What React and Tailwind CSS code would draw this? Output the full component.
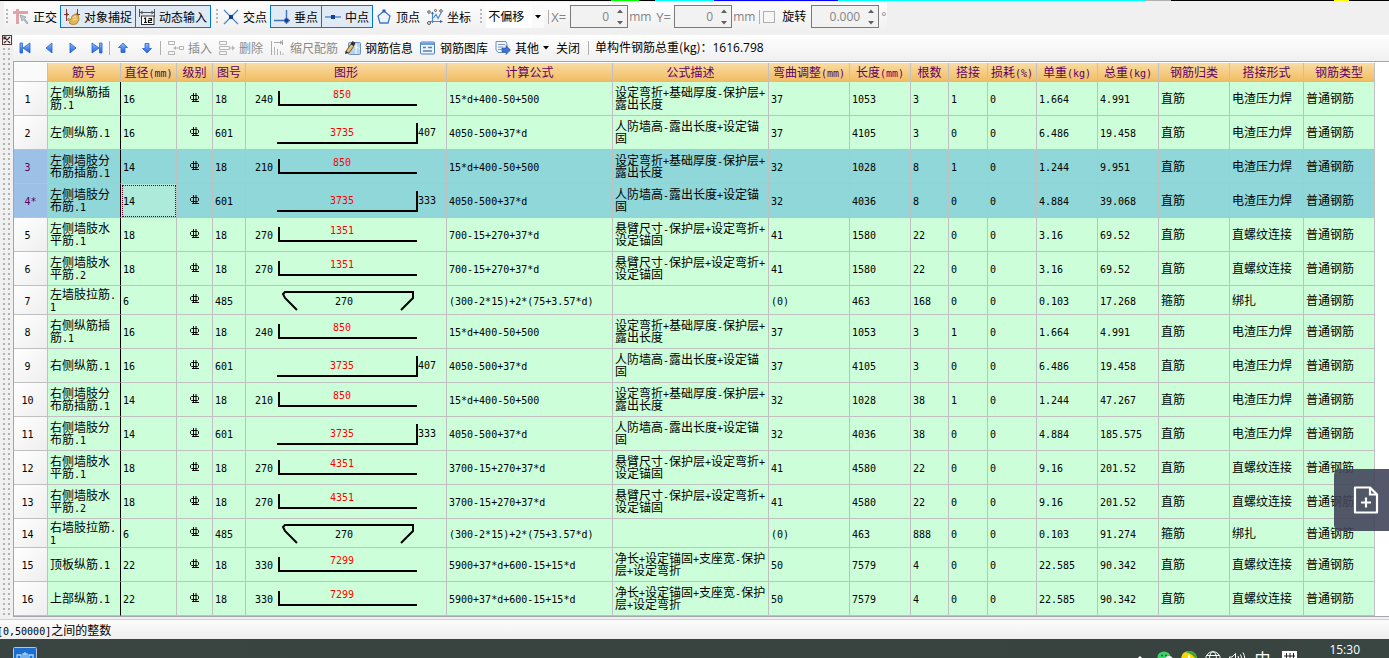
import React from "react";

const LATIN = "font-['DejaVu_Sans_Mono'] text-[10px]";

/* Sets half-width characters in a monospaced face beside full-width Chinese ones. */
function T({ children }) {
  const parts = String(children).match(/[\x20-\x7e]+|[^\x20-\x7e]+/g) || [];
  return parts.map((p, i) =>
    /^[\x20-\x7e]/.test(p) ? (
      <span key={i} className="font-['DejaVu_Sans_Mono',monospace] text-[10px] leading-[6px]">{p}</span>
    ) : (
      <React.Fragment key={i}>{p}</React.Fragment>
    )
  );
}

const COLUMNS = [
  ["", "w-[34px]"],
  ["筋号", "w-[73px]"],
  ["直径(mm)", "w-[56px]"],
  ["级别", "w-[36px]"],
  ["图号", "w-[33px]"],
  ["图形", "w-[201px]"],
  ["计算公式", "w-[166px]"],
  ["公式描述", "w-[156px]"],
  ["弯曲调整(mm)", "w-[81px]"],
  ["长度(mm)", "w-[61px]"],
  ["根数", "w-[38px]"],
  ["搭接", "w-[39px]"],
  ["损耗(%)", "w-[49px]"],
  ["单重(kg)", "w-[61px]"],
  ["总重(kg)", "w-[61px]"],
  ["钢筋归类", "w-[71px]"],
  ["搭接形式", "w-[74px]"],
  ["钢筋类型", "w-[71px]"],
];

const D1 = "设定弯折+基础厚度-保护层+\n露出长度";
const D2 = "人防墙高-露出长度+设定锚\n固";
const D3 = "悬臂尺寸-保护层+设定弯折+\n设定锚固";
const D4 = "净长+设定锚固+支座宽-保护\n层+设定弯折";
const DZ = "电渣压力焊";
const LW = "直螺纹连接";

/* name, diameter, figure no., side length, main length, formula, description, bend, length, count, laps, unit weight, total weight, class, joint */
const ROWS = [
  ["左侧纵筋插\n筋.1", 16, 18, 240, 850, "15*d+400-50+500", D1, "37", 1053, 3, 1, "1.664", "4.991", "直筋", DZ],
  ["左侧纵筋.1", 16, 601, 407, 3735, "4050-500+37*d", D2, "37", 4105, 3, 0, "6.486", "19.458", "直筋", DZ],
  ["左侧墙肢分\n布筋插筋.1", 14, 18, 210, 850, "15*d+400-50+500", D1, "32", 1028, 8, 1, "1.244", "9.951", "直筋", DZ],
  ["左侧墙肢分\n布筋.1", 14, 601, 333, 3735, "4050-500+37*d", D2, "32", 4036, 8, 0, "4.884", "39.068", "直筋", DZ],
  ["左侧墙肢水\n平筋.1", 18, 18, 270, 1351, "700-15+270+37*d", D3, "41", 1580, 22, 0, "3.16", "69.52", "直筋", LW],
  ["左侧墙肢水\n平筋.2", 18, 18, 270, 1351, "700-15+270+37*d", D3, "41", 1580, 22, 0, "3.16", "69.52", "直筋", LW],
  ["左墙肢拉筋.\n1", 6, 485, null, 270, "(300-2*15)+2*(75+3.57*d)", "", "(0)", 463, 168, 0, "0.103", "17.268", "箍筋", "绑扎"],
  ["右侧纵筋插\n筋.1", 16, 18, 240, 850, "15*d+400-50+500", D1, "37", 1053, 3, 1, "1.664", "4.991", "直筋", DZ],
  ["右侧纵筋.1", 16, 601, 407, 3735, "4050-500+37*d", D2, "37", 4105, 3, 0, "6.486", "19.458", "直筋", DZ],
  ["右侧墙肢分\n布筋插筋.1", 14, 18, 210, 850, "15*d+400-50+500", D1, "32", 1028, 38, 1, "1.244", "47.267", "直筋", DZ],
  ["右侧墙肢分\n布筋.1", 14, 601, 333, 3735, "4050-500+37*d", D2, "32", 4036, 38, 0, "4.884", "185.575", "直筋", DZ],
  ["右侧墙肢水\n平筋.1", 18, 18, 270, 4351, "3700-15+270+37*d", D3, "41", 4580, 22, 0, "9.16", "201.52", "直筋", LW],
  ["右侧墙肢水\n平筋.2", 18, 18, 270, 4351, "3700-15+270+37*d", D3, "41", 4580, 22, 0, "9.16", "201.52", "直筋", LW],
  ["右墙肢拉筋.\n1", 6, 485, null, 270, "(300-2*15)+2*(75+3.57*d)", "", "(0)", 463, 888, 0, "0.103", "91.274", "箍筋", "绑扎"],
  ["顶板纵筋.1", 22, 18, 330, 7299, "5900+37*d+600-15+15*d", D4, "50", 7579, 4, 0, "22.585", "90.342", "直筋", LW],
  ["上部纵筋.1", 22, 18, 330, 7299, "5900+37*d+600-15+15*d", D4, "50", 7579, 4, 0, "22.585", "90.342", "直筋", LW],
];

function Shape({ kind, side, main }) {
  const tie = kind === 485;
  const text = LATIN;
  return (
    <svg width="200" height={tie ? 28 : 33} className="block" fill="none" stroke="#000" strokeWidth="2">
      {kind === 18 && (
        <>
          <path d="M33 9V23H171" />
          <text x="9" y="21" className={text} fill="#000" stroke="none">{side}</text>
          <text x="96" y="16" textAnchor="middle" className={text} fill="#f00" stroke="none">{main}</text>
        </>
      )}
      {kind === 601 && (
        <>
          <path d="M31 27H171V7" />
          <text x="172" y="20" className={text} fill="#000" stroke="none">{side}</text>
          <text x="96" y="20" textAnchor="middle" className={text} fill="#f00" stroke="none">{main}</text>
        </>
      )}
      {tie && (
        <>
          <path d="M51 24L39 12L37 8L39 6H167V12L163 16L155 24" />
          <text x="98" y="19" textAnchor="middle" className={text} fill="#000" stroke="none">{main}</text>
        </>
      )}
    </svg>
  );
}

function Grade() {
  return (
    <svg width="11" height="11" viewBox="0 0 11 11" className="mx-auto block" fill="none" stroke="#000">
      <path d="M2.5 2.5H8.5L9.5 3.5V5.500L8.5 6.500H2.5L1.5 5.500V3.5Z M4.500 0V9 M7 0V9 M3 8.500H10" />
    </svg>
  );
}

function Row({ r, n }) {
  const sel = n === 3 || n === 4;
  const cell = "border-r border-b border-[#c0c0c0] p-0 pb-px pl-[2px] text-left whitespace-pre";
  return (
    <tr className={(r[2] === 485 ? "h-[29px]" : "h-[34px]") + (sel ? " bg-[#90d7d9]" : " bg-[#ccffd9]")}>
      <th
        className={
          "border-r border-b border-[#c0c0c0] p-0 pb-px text-center font-normal " +
          (n === 4 ? "" : "pr-1.5 ") +
          (sel ? "bg-[#9dc0e6] text-[#600060]" : "bg-gradient-to-br from-white to-[#eeeeee]")
        }
      >
        <T>{n === 4 ? "4*" : n}</T>
      </th>
      <td className="border-r border-b border-r-black border-b-[#c0c0c0] p-0 pb-px pl-[2px] whitespace-pre"><T>{r[0]}</T></td>
      <td className={cell + (n === 4 ? " bg-[#aeead9] outline-1 -outline-offset-2 outline-dotted outline-[#600030]" : "")}><T>{r[1]}</T></td>
      <td className="border-r border-b border-[#c0c0c0] p-0 pb-px"><Grade /></td>
      <td className={cell}><T>{r[2]}</T></td>
      <td className="border-r border-b border-[#c0c0c0] p-0"><Shape kind={r[2]} side={r[3]} main={r[4]} /></td>
      {r.slice(5, 11).map((v, i) => (
        <td key={i} className={cell}><T>{v}</T></td>
      ))}
      <td className={cell}><T>0</T></td>
      {r.slice(11).map((v, i) => (
        <td key={i} className={cell}><T>{v}</T></td>
      ))}
      <td className={cell}>普通钢筋</td>
    </tr>
  );
}

function Icon({ children, w = 16 }) {
  return (
    <svg width={w} height="16" viewBox={`0 0 ${w} 16`} fill="none" className="shrink-0">
      {children}
    </svg>
  );
}

function Tool({ icon, label, on, disabled, arrow }) {
  return (
    <button
      type="button"
      disabled={disabled}
      aria-pressed={on}
      className={
        "-ml-px flex h-[23px] shrink-0 items-center gap-1 border px-[3px] whitespace-nowrap " +
        (on ? "relative border-[#0078d7] bg-[#dfeaf5] " : "border-transparent ") +
        (disabled ? "text-[#8a8a8a]" : "text-black")
      }
    >
      {icon}
      <span>{label}</span>
      {arrow && <svg width="6" height="4" viewBox="0 0 6 4"><path d="M0 0H6L3 3.5Z" fill="#000" /></svg>}
    </button>
  );
}

const Grip = () => (
  <svg width="3" height="16" className="shrink-0">
    {[0, 4, 8, 12].map((y) => <rect key={y} x="0" y={y} width="2" height="2" fill="#b8b8b8" />)}
  </svg>
);

const Sep = ({ className }) => <span className={"h-[14px] w-px shrink-0 bg-[#b0b0b0] " + className} />;

function Spin({ id, value, width }) {
  return (
    <span className={"flex h-[23px] shrink-0 items-center border border-[#7a7a7a] bg-[#f2f2f2] " + width}>
      <input id={id} defaultValue={value} disabled className="min-w-0 flex-1 bg-transparent pr-1 text-right text-[#848484]" />
      <span className="flex w-[14px] flex-col items-center gap-2">
        <button type="button" aria-label="+" className="block">
          <svg width="6" height="4" viewBox="0 0 6 4" className="block"><path d="M0 4L3 0.5L6 4Z" fill="#606060" /></svg>
        </button>
        <button type="button" aria-label="-" className="block">
          <svg width="6" height="4" viewBox="0 0 6 4" className="block"><path d="M0 0L3 3.5L6 0Z" fill="#606060" /></svg>
        </button>
      </span>
    </span>
  );
}

function Nav({ d, label, className = "w-6" }) {
  return (
    <button type="button" aria-label={label} className={"flex h-[23px] shrink-0 items-center justify-center " + className}>
      <svg width="14" height="14" viewBox="0 0 14 14">
        <path d={d} fill="url(#navBlue)" stroke="#2a5fcf" strokeWidth="0.8" />
      </svg>
    </button>
  );
}

const ICONS = {
  ortho: <Icon><path d="M0 3.5H15M4.5 0V15" stroke="#dda5a5" strokeWidth="3" /><path d="M7 6L9 12L10.5 10.5L14 15L15 14L11.5 9.5L13 8Z" fill="#b9c8d6" stroke="#8a98a8" strokeWidth="0.7" /></Icon>,
  snap: <Icon><path d="M2.5 0V12M13.5 0V8M0 5.5H5M11 5.5H16" stroke="#8c3b3b" /><path d="M3.5 3.500L1 5.5L3.5 7.500ZM12.5 3.500L15 5.5L12.5 7.500Z" fill="#7a3030" /><path d="M4 9.500L7 10.500L8 7L11 5L14.500 6.500L15 11L12.500 15L8 15.500L5 14L6.500 12.500L3.500 11Z" fill="#e3b75b" stroke="#a87a2a" strokeWidth="0.8" /><path d="M9 8.500L12 7.500M9 11L12.500 10" stroke="#fbe7b0" /></Icon>,
  dyn: <Icon><path d="M0.500 0V8M15.500 0V8M0.500 3.5H15.500" stroke="#555" /><path d="M3.500 1.500L1 3.5L3.500 5.500ZM12.500 1.500L15 3.5L12.500 5.500Z" fill="#555" /><rect x="2.500" y="7" width="12.500" height="8.500" fill="#fff" stroke="#333" /><path d="M5 9.500L6.500 9V13.500M5 13.500H8M9.500 9.500H12.500V11.300H9.500V13.500H13" stroke="#111" strokeWidth="1.200" /></Icon>,
  cross: <Icon><path d="M1 1L15 15M15 1L1 15" stroke="#4b86cf" strokeWidth="1.3" /><rect x="6" y="6" width="4" height="4" fill="#123f8f" /></Icon>,
  perp: <Icon><path d="M0 11.500H16M12.500 1V15" stroke="#3c72b8" strokeWidth="1.4" /><rect x="10.500" y="9.500" width="4" height="4" fill="#123f8f" /></Icon>,
  mid: <Icon><path d="M0 8H16" stroke="#4b86cf" strokeWidth="1.4" /><rect x="6" y="6" width="4" height="4" fill="#123f8f" /></Icon>,
  vertex: <Icon><path d="M8 2L14 7L12 14H4L2 7Z" fill="#eef5fd" stroke="#3c78c8" strokeWidth="1.3" /><path d="M6.500 0.500H9.500V3.500H6.500Z" fill="#2a5fb5" /></Icon>,
  coord: <Icon><path d="M5.500 3V14M3 12.500H15M6.500 9L9 5.500L11 9.500L14 4" stroke="#4b86cf" strokeWidth="1.2" /><path d="M4 5L5.500 2.500L7 5ZM13 11L16 12.500L13 14Z" fill="#2f68b8" /><circle cx="2" cy="3" r="1.300" stroke="#333" strokeWidth="0.800" /><circle cx="2" cy="14" r="1.500" stroke="#333" strokeWidth="0.800" /><circle cx="14" cy="2" r="1.300" stroke="#333" strokeWidth="0.800" /><circle cx="8.500" cy="1.500" r="1" stroke="#333" strokeWidth="0.800" /></Icon>,
  insert: <Icon><path d="M0.500 1.500H6.500V4.500H0.500ZM0.500 11.500H6.500V14.500H0.500ZM11.500 6.500H15.500V9.500H11.500ZM7 8H11" stroke="#b4b4b4" /><path d="M5 8L8 6V10Z" fill="#b4b4b4" /></Icon>,
  del: <Icon><path d="M0.500 1.500H7.500V4.500H0.500ZM0.500 11.500H7.500V14.500H0.500ZM0.500 6.500H10.500V9.500H0.500ZM11 8H14" stroke="#b4b4b4" /><path d="M13 5.500L16 8L13 10.500Z" fill="#b4b4b4" /></Icon>,
  scale: <Icon><path d="M1.500 1V15M4 2.500H12M12.500 0V5" stroke="#aaa" /><path d="M10 0.500L13 2.500L10 4.500Z" fill="#aaa" /><path d="M4.500 7V15M7.500 9V15M10.500 11V15M13 13V15" stroke="#b4b4b4" /></Icon>,
  info: <Icon><rect x="3.500" y="2.500" width="12" height="12" rx="1" fill="#b9d2ee" stroke="#6c93c4" /><path d="M5 10C8 5 11 6 15 9M11 3V14" stroke="#fff" /><path d="M0.500 12L6 4L9 6L4 13Z" fill="#e2bf7a" stroke="#6b4d1c" strokeWidth="0.900" /><path d="M0 14L3.500 13L1 11Z" fill="#222" /><path d="M5.500 4L7.500 1L10.500 3L9 6Z" fill="#333" /></Icon>,
  lib: <Icon><rect x="0.500" y="2" width="14" height="12" rx="1" fill="#edf4fc" stroke="#4a7fc1" /><path d="M1 2.500H14V5H1Z" fill="#6d9edb" /><path d="M3 7.500H6M8 7.500H12M3 11H12" stroke="#5a7fae" strokeWidth="1.300" /></Icon>,
  other: <Icon><path d="M1 1.500H11L12 4V12.500H3L1 10Z" fill="#f2f6fb" stroke="#6f8fb8" /><path d="M3 4.500H10M3 7H8M3 9.500H7" stroke="#7d9cc4" /><path d="M7 8H11V5.500L15.500 10L11 14.500V12H7Z" fill="#3d74d6" stroke="#234f9e" strokeWidth="0.600" /></Icon>,
};

function DrawingEdge() {
  return (
    <div className="flex h-px shrink-0 overflow-hidden bg-black">
      <span className="w-[611px] shrink-0" />
      <span className="w-[28px] bg-[#0f0]" />
      <span className="w-[16px]" />
      <span className="w-[59px] bg-[#0ff]" />
      <span className="w-[124px] bg-[#00f]" />
      <span className="w-[307px] bg-[#0ff]" />
      <span className="w-[26px] bg-[#b0b0b0]" />
      <span className="w-[163px]" />
      <span className="w-[15px] bg-[#ff0]" />
    </div>
  );
}

const band = "flex h-[29px] shrink-0 items-center bg-gradient-to-b from-[#fdfdfd] to-[#f0f0f0]";

export default function App() {
  return (
    <div className="relative flex min-h-screen flex-col overflow-hidden bg-[#f0f0f0] font-['Noto_Sans_CJK_SC',sans-serif] text-[12px] leading-[12px] text-black">
      <svg width="0" height="0" className="absolute">
        <defs>
          <linearGradient id="navBlue" x1="0" y1="0" x2="0" y2="1">
            <stop offset="0" stopColor="#8fc0ff" />
            <stop offset="1" stopColor="#1a5fe0" />
          </linearGradient>
        </defs>
      </svg>
      <DrawingEdge />

      <div className="flex h-[34px] shrink-0 items-start pt-px pl-1">
        <div className={band + " pl-[2px]"}>
          <Grip />
          <span className="w-px" />
          <Tool icon={ICONS.ortho} label="正交" />
          <Tool icon={ICONS.snap} label="对象捕捉" on />
          <Tool icon={ICONS.dyn} label="动态输入" on />
        </div>
        <div className={band + " pl-[5px]"}>
          <Grip />
          <span className="w-px" />
          <Tool icon={ICONS.cross} label="交点" />
          <Tool icon={ICONS.perp} label="垂点" on />
          <Tool icon={ICONS.mid} label="中点" on />
          <Tool icon={ICONS.vertex} label="顶点" />
          <Tool icon={ICONS.coord} label="坐标" />
        </div>
        <div className={band + " pl-[5px] font-['Open_Sans','Noto_Sans_CJK_SC',sans-serif]"}>
          <Grip />
          <span className="ml-[3px] flex h-[23px] items-center bg-white">
            <select aria-label="偏移方式" className="w-[46px] appearance-none bg-white pl-[2px] text-[12px]">
              <option>不偏移</option>
            </select>
            <span className="flex h-full w-3 items-center justify-center bg-[#fafafa]">
              <svg width="6" height="4" viewBox="0 0 6 4"><path d="M0 0H6L3 3.500Z" fill="#000" /></svg>
            </span>
          </span>
          <Sep className="ml-1" />
          <label htmlFor="ox" className="w-[21px] pl-[2px] text-[13px] text-[#848484]">X=</label>
          <Spin id="ox" value="0" width="w-[58px]" />
          <span className="w-[28px] pl-px text-[#848484]">mm</span>
          <label htmlFor="oy" className="w-[18px] text-[13px] text-[#848484]">Y=</label>
          <Spin id="oy" value="0" width="w-[58px]" />
          <span className="w-[27px] pl-px text-[#848484]">mm</span>
          <Sep className="mr-[3px]" />
          <input id="rot" type="checkbox" className="h-[12px] w-[12px] appearance-none border border-[#b0b0b0] bg-[#f6f6f6]" />
          <label htmlFor="rot" className="w-[36px] pl-[7px]">旋转</label>
          <Spin id="ang" value="0.000" width="w-[68px]" />
          <label htmlFor="ang" className="w-2 pl-[2px] text-[#848484]">°</label>
        </div>
      </div>

      <div className="flex shrink-0">
        <div className="flex w-[13px] shrink-0 flex-col items-center">
          <button type="button" aria-label="关闭面板" className="block">
            <svg width="10" height="10" viewBox="0 0 10 10" className="block">
              <rect x="0.500" y="0.500" width="9" height="9" fill="#f4f0f0" stroke="#5c3438" />
              <path d="M2 2L8 8M8 2L2 8M2 4.500V2H4.500" stroke="#3b2a2e" fill="none" strokeWidth="1.200" />
            </svg>
          </button>
          <svg className="w-[9px] flex-1" height="40">
            <defs>
              <pattern id="dots" width="5" height="5" patternUnits="userSpaceOnUse">
                <rect x="1" y="3" width="2" height="2" fill="#b4b4b4" />
              </pattern>
            </defs>
            <rect width="9" height="100%" fill="url(#dots)" />
          </svg>
        </div>

        <div className="flex min-w-0 flex-1 flex-col">
          <div className="flex h-[26px] items-center overflow-hidden bg-gradient-to-b from-white to-[#f0f0f0] pb-px">
            <Nav label="第一条" d="M2 2H4.500V12H2ZM12 2V12L5 7Z" />
            <Nav label="上一条" d="M10 2V12L4 7Z" />
            <Nav label="下一条" d="M4 2V12L10 7Z" />
            <Nav label="最后一条" d="M2 2V12L9 7ZM9.500 2H12V12H9.500Z" />
            <Sep className="mr-px" />
            <Nav label="上移" d="M7 2L11.500 6.500H9V11.500H5V6.500H2.500Z" />
            <Nav label="下移" d="M7 12L11.500 7.500H9V2.500H5V7.500H2.500Z" />
            <Sep className="mr-1 ml-px" />
            <Tool icon={ICONS.insert} label="插入" disabled />
            <Tool icon={ICONS.del} label="删除" disabled />
            <Tool icon={ICONS.scale} label="缩尺配筋" disabled />
            <Tool icon={ICONS.info} label="钢筋信息" />
            <Tool icon={ICONS.lib} label="钢筋图库" />
            <Tool icon={ICONS.other} label="其他" arrow />
            <Tool label="关闭" />
            <Sep className="mr-[6px] ml-1" />
            <span className="whitespace-nowrap">
              单构件钢筋总重(kg)：<span className="font-['Open_Sans',sans-serif] text-[12px]">1616.798</span>
            </span>
          </div>

          <div className="overflow-hidden border-y border-l border-[#a5a5ad] bg-white pt-px">
            <table className="w-[1361px] table-fixed border-separate border-spacing-0">
              <colgroup>
                {COLUMNS.map(([name, w]) => <col key={name} className={w} />)}
              </colgroup>
              <thead>
                <tr className="h-[19px]">
                  {COLUMNS.map(([name], i) => (
                    <th
                      key={name}
                      className={
                        "border-r border-b border-[#c0c0c0] p-0 font-normal whitespace-nowrap text-[#600060] " +
                        (i ? "bg-gradient-to-b from-[#f9dca4] to-[#f1bd63]" : "bg-[#fafafa]")
                      }
                    >
                      <T>{name}</T>
                    </th>
                  ))}
                </tr>
              </thead>
              <tbody>
                {ROWS.map((r, i) => <Row key={i} r={r} n={i + 1} />)}
              </tbody>
            </table>
          </div>
        </div>
      </div>

      <div className="mt-[2px] flex h-5 shrink-0 items-center overflow-hidden border-t border-[#d0d0d0] bg-gradient-to-b from-[#fcfcfc] to-[#efefef]">
        <span className="-ml-[3px] whitespace-nowrap"><T>[0,50000]之间的整数</T></span>
      </div>

      <footer className="flex h-[19px] shrink-0 items-start overflow-hidden bg-gradient-to-r from-[#3a4440] via-[#38433f] via-85% to-[#3a4642] pl-[13px]">
        <svg width="24" height="20" viewBox="0 0 24 20" className="mt-2">
          <rect x="0.500" y="0.500" width="23" height="22" rx="1" fill="#1a6fd0" stroke="#b9c4cc" />
          <path d="M4 13V8H8V13M16 13V8H20V13M10 13V7H14V13M12 5V13" stroke="#a9d1f7" fill="none" strokeWidth="1.300" />
        </svg>
        <div className="ml-auto flex items-start gap-2 pt-3 text-white">
          <svg width="10" height="8" viewBox="0 0 10 8" className="mt-[5px] mr-1"><path d="M1 5L5 1L9 5" stroke="#fff" fill="none" strokeWidth="1.500" /></svg>
          <svg width="16" height="14" viewBox="0 0 16 14"><ellipse cx="7" cy="6" rx="6.500" ry="5.500" fill="#3fd06b" /><ellipse cx="12" cy="9" rx="4" ry="4" fill="#e9f6ec" /><circle cx="5" cy="4.500" r="0.900" fill="#1c5b31" /><circle cx="9" cy="4.500" r="0.900" fill="#1c5b31" /></svg>
          <svg width="16" height="16" viewBox="0 0 16 16"><circle cx="8" cy="8" r="8" fill="#f5d90a" /><path d="M4 1A8 8 0 0 1 16 8L13 6Q10 2 4 1Z" fill="#3fa33a" /><path d="M8 4V12M5 8H11" stroke="#fff" strokeWidth="1.800" /></svg>
          <svg width="16" height="16" viewBox="0 0 16 16" fill="none" stroke="#fff"><circle cx="8" cy="8" r="7.300" /><ellipse cx="8" cy="8" rx="3.500" ry="7.300" /><path d="M1.500 4.500H14.500M0.700 8H15.300" /></svg>
          <svg width="17" height="16" viewBox="0 0 17 16" fill="none" stroke="#fff"><path d="M0.500 6H3L6.500 2.500V13L3 10H0.500ZM9 5Q10.500 7.500 9 10.500M11.500 3.500Q14 7.500 11.500 12M14 1.500Q17.500 7.500 14 14" /></svg>
          <span className="text-[16px] leading-[14px]">中</span>
          <svg width="15" height="14" viewBox="0 0 15 14" className="ml-1"><rect width="15" height="14" fill="#fff" /><path d="M2 5H13M2 9H13M4.500 2V12M8 2V12M11.500 2V12" stroke="#222" /></svg>
        </div>
        <time className="shrink-0 pt-1 pr-[29px] pl-8 font-['Open_Sans',sans-serif] text-[12px] leading-[14px] text-white">15:30</time>
      </footer>

      <button
        type="button"
        aria-label="新建"
        className="absolute top-[469px] right-0 flex h-[62px] w-[55px] items-center justify-center rounded-l-md bg-[#43455a]/90 pl-2"
      >
        <svg width="26" height="28" viewBox="0 0 26 28" fill="none" stroke="#fff" strokeWidth="2.200">
          <path d="M2 1.500H17L24 8.500V26.500H2Z" strokeLinejoin="round" />
          <path d="M17 1.500V8.500H24M13 11.500V21.500M8 16.500H18" />
        </svg>
      </button>
    </div>
  );
}
